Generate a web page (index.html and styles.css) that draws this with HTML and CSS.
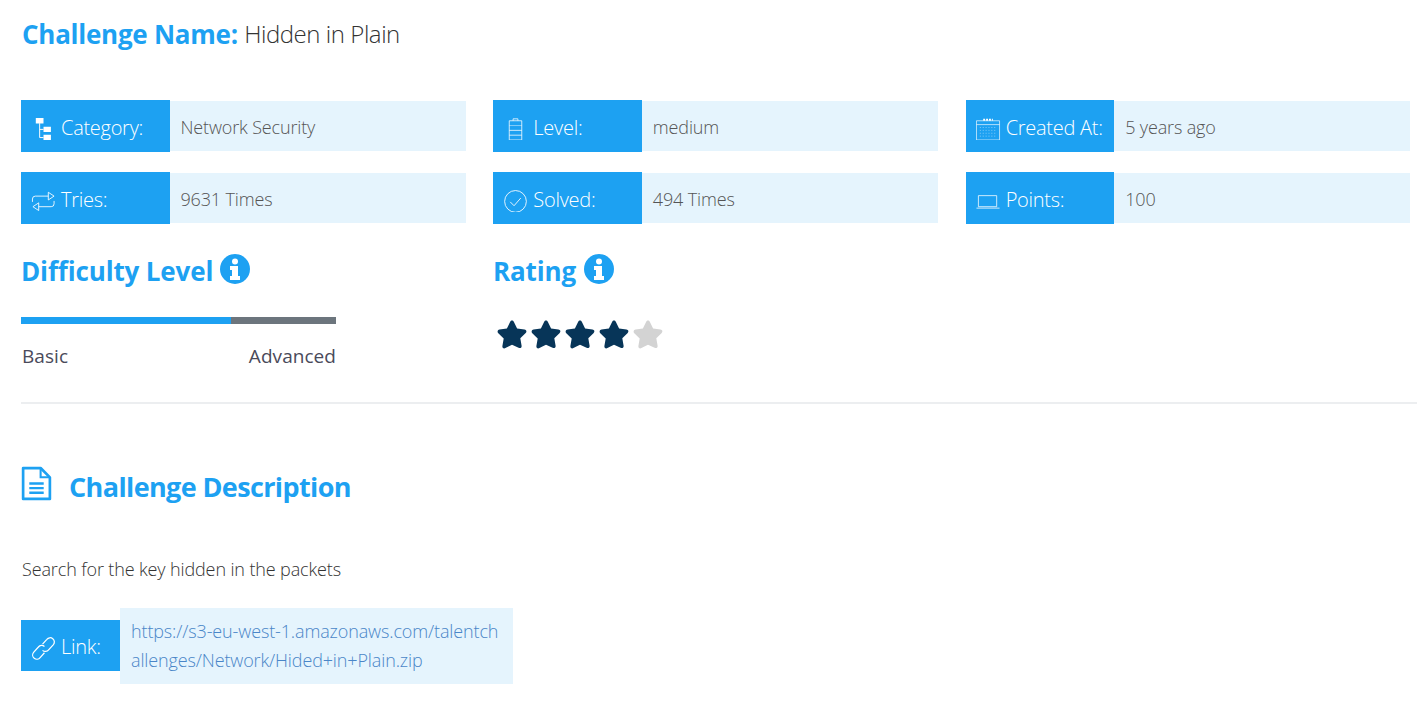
FILE: index.html
```html
<!DOCTYPE html>
<html lang="en">
<head>
<meta charset="utf-8">
<title>Hidden in Plain</title>
<link rel="stylesheet" href="styles.css">
</head>
<body>
<main class="page">
  <h1 class="title"><span class="title-key">Challenge Name:</span> <span class="title-val">Hidden in Plain</span></h1>

  <section class="facts">
    <div class="fact"><div class="fact-label">
      <svg class="ic" viewBox="0 0 26 26"><path fill="none" stroke="#fff" d="M9 9v15h4M9 15.500h4"/><path fill="#fff" d="M5 3.700h8v5.600H5zM13 12.700h7.700v5.600H13zM13 21h7.700v5.700H13z"/></svg>
      <span>Category:</span></div><div class="fact-value">Network Security</div></div>
    <div class="fact"><div class="fact-label">
      <svg class="ic" viewBox="0 0 26 26" fill="none" stroke="#fff" stroke-width=".8"><path d="M6.500 6.500h13v20h-13z"/><path d="M10.500 6.500v-2h5v2M6.500 16.500h13M6.500 21.500h13"/><path d="M6.500 11.500h13" opacity=".6"/></svg>
      <span>Level:</span></div><div class="fact-value">medium</div></div>
    <div class="fact"><div class="fact-label">
      <svg class="ic" viewBox="0 0 26 26" fill="none" stroke="#fff" stroke-width=".8"><path d="M.5 6.500h24v20H.5zM.5 10.500h24" opacity=".85"/><path d="M7.500 5.500h10" stroke-width="2" stroke-dasharray="2 1"/><path d="M4 13.500h17M4 16.500h17M4 19.500h17M4 22.500h17" stroke-dasharray="1 2" opacity=".6"/></svg>
      <span>Created At:</span></div><div class="fact-value">5 years ago</div></div>

    <div class="fact"><div class="fact-label">
      <svg class="ic" viewBox="0 0 26 26" fill="none" stroke="#fff" stroke-width=".9"><path d="M1.500 16v-3a3 3 0 0 1 3-3h13.500"/><path d="M18 6l6 4-6 4z"/><path d="M24 15v3a3 3 0 0 1-3 3H8"/><path d="M8 17l-6 4 6 4z"/></svg>
      <span>Tries:</span></div><div class="fact-value">9631 Times</div></div>
    <div class="fact"><div class="fact-label">
      <svg class="ic" viewBox="0 0 26 26" fill="none" stroke="#fff" stroke-width=".9"><circle cx="13" cy="15.500" r="11.300"/><path d="M7.500 16l4 4 7-8"/></svg>
      <span>Solved:</span></div><div class="fact-value">494 Times</div></div>
    <div class="fact"><div class="fact-label">
      <svg class="ic" viewBox="0 0 26 26" fill="none" stroke="#fff" stroke-width=".8"><path d="M2.500 9.500h19v11.500h-19zM.5 22.500h24"/></svg>
      <span>Points:</span></div><div class="fact-value">100</div></div>
  </section>

  <section class="meters">
    <div class="meter">
      <h2 class="sub">Difficulty Level <svg class="info" viewBox="0 0 30 30"><circle cx="15" cy="15" r="15" fill="#1da1f2"/><circle cx="15" cy="7.500" r="3" fill="#fff"/><path fill="#fff" d="M10 12h8v10h2v4H10v-4h2v-6h-2z"/></svg></h2>
      <div class="bar"><div class="bar-fill"></div></div>
      <div class="bar-ends"><span>Basic</span><span>Advanced</span></div>
    </div>
    <div class="meter rating">
      <h2 class="sub">Rating <svg class="info" viewBox="0 0 30 30"><circle cx="15" cy="15" r="15" fill="#1da1f2"/><circle cx="15" cy="7.500" r="3" fill="#fff"/><path fill="#fff" d="M10 12h8v10h2v4H10v-4h2v-6h-2z"/></svg></h2>
      <div class="stars">
        <svg class="star on" viewBox="0 0 30 30"><use href="#s"/></svg>
        <svg class="star on" viewBox="0 0 30 30"><use href="#s"/></svg>
        <svg class="star on" viewBox="0 0 30 30"><use href="#s"/></svg>
        <svg class="star on" viewBox="0 0 30 30"><use href="#s"/></svg>
        <svg class="star" viewBox="0 0 30 30"><use href="#s"/></svg>
      </div>
    </div>
  </section>

  <hr class="rule">

  <section class="desc">
    <h2 class="desc-title">
      <svg class="doc" viewBox="0 0 30 34" fill="none" stroke="#1da1f2" stroke-width="2.600"><path d="M2 2h17l9 9v21H2z" stroke-linejoin="round"/><path d="M19 2v9h9" stroke-width="2"/><path d="M8 17h14M8 21.500h14M8 26h14" stroke-width="2.400"/></svg>
      <span>Challenge Description</span>
    </h2>
    <p class="desc-text">Search for the key hidden in the packets</p>
    <div class="link">
      <div class="fact-label link-label">
        <svg class="ic" viewBox="0 0 26 26" fill="none" stroke="#fff" stroke-width="1.300"><path d="M12 10l4.500-5a4.300 4.300 0 0 1 6.800 5.500l-5 5.500a4.300 4.300 0 0 1-6.300.5"/><path d="M14 19l-4.500 5a4.300 4.300 0 0 1-6.800-5.500l5-5.500a4.300 4.300 0 0 1 6.300-.5"/></svg>
        <span>Link:</span></div>
      <a class="link-value" href="#">https://s3-eu-west-1.amazonaws.com/talentchallenges/Network/Hided+in+Plain.zip</a>
    </div>
  </section>
</main>
<svg class="defs" width="0" height="0"><defs><path id="s" d="M15 1.500c.8 0 1.400.5 1.800 1.300l3.300 6.800 7.400 1c2 .3 2.500 2.100 1.200 3.400l-5.400 5.200 1.300 7.500c.3 1.900-1.300 2.900-3 2.100L15 25.700l-6.600 3.400c-1.700.8-3.300-.2-3-2.100l1.300-7.500-5.400-5.200C.0 13 .5 11 2.500 10.600l7.400-1 3.300-6.800c.4-.8 1-1.300 1.800-1.300z"/></defs></svg>
</body>
</html>
```
FILE: styles.css
```css
* { box-sizing: border-box; }
html, body { margin: 0; padding: 0; background: #fff; }
body { font-family: "Open Sans", "Noto Sans", sans-serif; color: #444; overflow: hidden; }
.page { padding: 0 7px 0 21px; height: 701px; }

.title { margin: 0; height: 100px; padding: 17px 0 0 1px; font-size: 24px; line-height: 34px; font-weight: 400; }
.title-key { color: #1da1f2; font-weight: 700; font-size: 26px; letter-spacing: -.25px; vertical-align: -1px; }
.title-val { color: #333; font-weight: 300; letter-spacing: -.45px; }

.facts { display: grid; grid-template-columns: repeat(3, 444.600px); column-gap: 27.750px; row-gap: 20px; }
.fact { display: flex; align-items: center; height: 52px; }
.fact-label { display: flex; align-items: center; gap: 5px; flex: 0 0 148.500px; height: 52px; padding: 2px 0 0 10px; background: #1da1f2; color: #fff; font-size: 20px; font-weight: 300; letter-spacing: -.28px; }
.fact-value { flex: 1; height: 50px; line-height: 52px; padding-left: 11px; background: #e5f4fd; color: #555; font-size: 18px; font-weight: 300; letter-spacing: -.15px; }
.ic { width: 25px; height: 26px; flex: none; }

.meters { display: flex; padding-top: 26px; height: 178px; }
.meter { width: 472px; }
.sub { margin: 0; display: flex; align-items: center; gap: 7px; height: 42px; font-size: 26px; line-height: 42px; font-weight: 700; color: #1da1f2; letter-spacing: -.15px; }
.info { width: 30px; height: 30px; margin-top: -4px; }
.rating .info { margin-left: 1px; }
.bar { width: 315px; height: 7px; margin-top: 25px; background: #6c757d; }
.bar-fill { width: 210px; height: 100%; background: #1da1f2; }
.bar-ends { width: 315px; display: flex; justify-content: space-between; padding: 0 0 0 1px; margin-top: 18px; font-size: 19px; line-height: 28px; letter-spacing: .05px; color: #4a4a5a; }
.stars { display: flex; gap: 4px; margin: 27px 0 0 4px; }
.star { width: 30px; height: 30px; fill: #d3d3d3; }
.star.on { fill: #073558; }

.rule { margin: 0; border: 0; border-top: 2px solid #eceef0; margin-right: -7px; }

.desc { padding-top: 61px; }
.desc-title { margin: 0; display: flex; align-items: center; gap: 17px; height: 44px; font-size: 27px; line-height: 44px; font-weight: 700; color: #1da1f2; letter-spacing: -.62px; }
.doc { width: 31px; height: 35px; margin-top: -8px; }
.desc-text { margin: 47px 0 0 1px; font-size: 18px; line-height: 26px; font-weight: 300; color: #333; letter-spacing: -.13px; }
.link { display: flex; align-items: center; margin-top: 26px; }
.link-label { flex: 0 0 99px; height: 51px; margin-top: -1px; }
.link-value { display: block; width: 393px; padding: 9px 11px; background: #e5f4fd; color: #4a86c8; font-size: 18px; line-height: 29px; font-weight: 300; letter-spacing: -.13px; word-break: break-all; text-decoration: none; }
.defs { position: absolute; }
```
